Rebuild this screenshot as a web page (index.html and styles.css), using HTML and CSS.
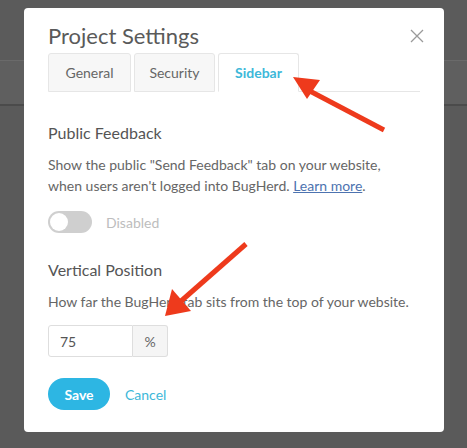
FILE: index.html
```html
<!DOCTYPE html>
<html lang="en">
<head>
    <meta charset="UTF-8">
    <meta name="viewport" content="width=device-width, initial-scale=1.0">
    <title>Project Settings</title>
    <link rel="stylesheet" href="styles.css">
</head>
<body>
    <div class="modal">
        <div class="modal-head">
            <h1 class="modal-title">Project Settings</h1>
            <span class="close">
                <svg width="14" height="14" viewBox="0 0 14 14"><path d="M1 1L13 13M13 1L1 13" stroke="#9a9a9a" stroke-width="1.3" fill="none"/></svg>
            </span>
        </div>

        <div class="tabs">
            <div class="tab">General</div>
            <div class="tab">Security</div>
            <div class="tab active">Sidebar</div>
            <div class="tab-fill"></div>
        </div>

        <h2 class="section-title">Public Feedback</h2>
        <p class="desc">Show the public "Send Feedback" tab on your website, when users aren't logged into BugHerd. <a href="#">Learn&nbsp;more</a>.</p>

        <div class="switch-row">
            <span class="switch"><span class="knob"></span></span>
            <span class="switch-label">Disabled</span>
        </div>

        <h2 class="section-title">Vertical Position</h2>
        <p class="desc">How far the BugHerd tab sits from the top of your website.</p>

        <div class="input-group">
            <input type="text" class="num" value="75">
            <span class="addon">%</span>
        </div>

        <div class="actions">
            <button class="save">Save</button>
            <a href="#" class="cancel">Cancel</a>
        </div>
    </div>

    <!-- annotation arrows drawn over the screenshot -->
    <svg class="arrows" width="467" height="448" viewBox="0 0 467 448">
        <line x1="384" y1="130" x2="306" y2="89" stroke="#ee3a1c" stroke-width="5"/>
        <polygon points="293,77 320,80 307,99" fill="#ee3a1c"/>
        <line x1="246" y1="244" x2="180" y2="302" stroke="#ee3a1c" stroke-width="5"/>
        <polygon points="165,316 191,311 172,289" fill="#ee3a1c"/>
    </svg>
</body>
</html>
```

FILE: styles.css
```css
* {
    margin: 0;
    padding: 0;
    box-sizing: border-box;
}
body {
    width: 467px;
    height: 448px;
    overflow: hidden;
    font-family: Lato, "Open Sans", sans-serif;
    background: linear-gradient(to bottom,
        #5b5b5b 0, #5b5b5b 60px,
        #6a6a6a 60px, #6a6a6a 61px,
        #5f5f5f 61px, #5f5f5f 104px,
        #4b4b4b 104px, #4b4b4b 106px,
        #5a5a5a 106px);
    padding: 8px 0 0 24px;
}
.modal {
    width: 420px;
    height: 424px;
    background: #fff;
    border-radius: 4px;
    padding: 14px 24px 0 24px;
    color: #555;
}
.modal-head {
    display: flex;
    justify-content: space-between;
    align-items: flex-start;
}
.modal-title {
    font-weight: 400;
    font-size: 22px;
    line-height: 28px;
    color: #5a5a5a;
}
.close {
    padding: 5px 0 0 0;
    margin-right: -4px;
}
.tabs {
    display: flex;
    gap: 3px;
    margin-top: 3px;
    height: 39px;
}
.tab {
    width: 81px;
    border: 1px solid #e6e6e6;
    border-radius: 3px 3px 0 0;
    background: #f7f7f7;
    font-size: 14px;
    color: #666;
    display: flex;
    align-items: center;
    justify-content: center;
    padding-bottom: 1px;
}
.tab:first-child {
    width: 83px;
}
.tab.active {
    background: #fff;
    border-bottom-color: #fff;
    color: #3db8d9;
    font-weight: 700;
}
.tab-fill {
    flex: 1;
    border-bottom: 1px solid #e6e6e6;
    margin-left: -3px;
}
.section-title {
    font-weight: 400;
    font-size: 16px;
    line-height: 20px;
    color: #555;
    margin-top: 31px;
}
.desc {
    font-size: 14px;
    line-height: 21px;
    color: #666;
    max-width: 364px;
}
.desc a {
    color: #4d73b0;
}
.switch-row {
    display: flex;
    align-items: center;
    margin-top: 15px;
    gap: 14px;
}
.switch {
    width: 44px;
    height: 22px;
    border-radius: 11px;
    background: #cfcfcf;
    padding: 2px;
    display: flex;
}
.knob {
    width: 18px;
    height: 18px;
    border-radius: 50%;
    background: #fff;
}
.switch-label {
    font-size: 14px;
    color: #bdbdbd;
}
.section-title + .desc {
    margin-top: 11px;
}
.switch-row + .section-title {
    margin-top: 27px;
}
.input-group {
    display: flex;
    margin-top: 13px;
    height: 32px;
}
.num {
    width: 85px;
    height: 32px;
    border: 1px solid #dedede;
    border-radius: 3px 0 0 3px;
    font-family: Lato, "Open Sans", sans-serif;
    font-size: 14px;
    color: #555;
    padding-left: 11px;
    outline: none;
}
.addon {
    width: 35px;
    border: 1px solid #dedede;
    border-left: none;
    border-radius: 0 3px 3px 0;
    background: #f5f5f5;
    font-size: 14px;
    color: #666;
    display: flex;
    align-items: center;
    justify-content: center;
}
.actions {
    display: flex;
    align-items: center;
    margin-top: 21px;
    gap: 15px;
}
.save {
    width: 62px;
    height: 32px;
    border: none;
    border-radius: 16px;
    background: #2db6e3;
    color: #fff;
    font-family: Lato, "Open Sans", sans-serif;
    font-size: 14px;
    font-weight: 700;
}
.cancel {
    color: #3db8d9;
    text-decoration: none;
    font-size: 14px;
}
.arrows {
    position: absolute;
    left: 0;
    top: 0;
}
```
